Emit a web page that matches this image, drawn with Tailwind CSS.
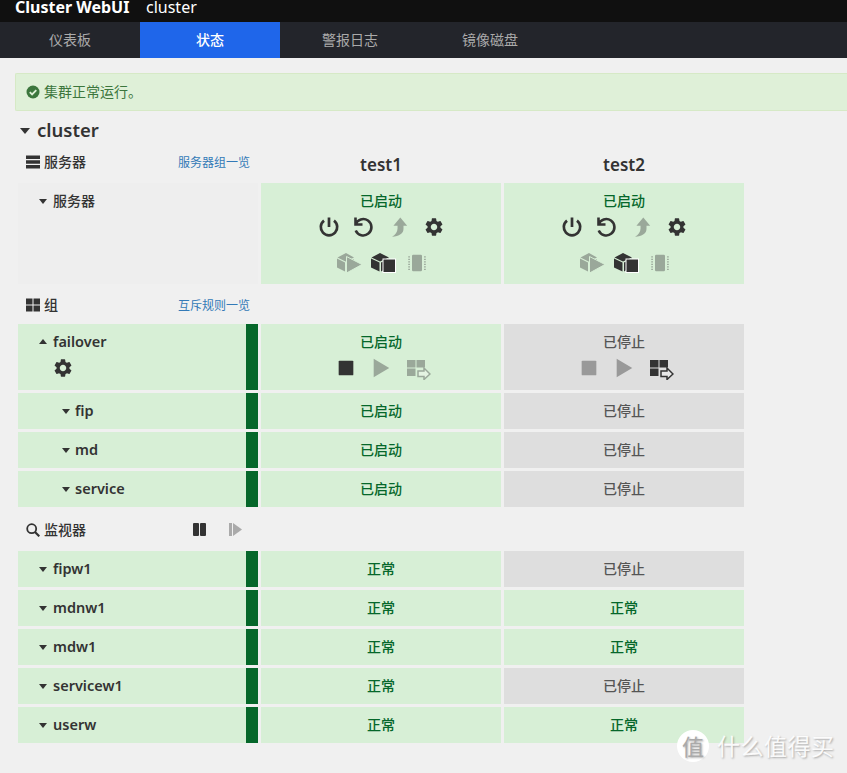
<!DOCTYPE html>
<html>
<head>
  <meta charset="utf-8">
  <meta name="viewport" content="width=device-width, initial-scale=1.0">
  <script src="https://cdn.jsdelivr.net/npm/@tailwindcss/browser@4"></script>
</head>
<body class="relative h-[773px] overflow-hidden bg-[#f0f0f0] text-[#333] text-[14px] font-['Noto_Sans','Noto_Sans_CJK_SC',sans-serif]">

  <!-- icon set -->
  <svg class="hidden">
    <symbol id="i-power" viewBox="0 0 24 24"><path d="M12 2.500v9.500M7 5.600a8.200 8.200 0 1 0 10 0" fill="none" stroke="currentColor" stroke-width="2.700"/></symbol>
    <symbol id="i-restart" viewBox="0 0 24 24"><path d="M3.500 2.500v7h7M3.500 9.500A8.200 8.200 0 1 1 3.700 15.500" fill="none" stroke="currentColor" stroke-width="2.600"/></symbol>
    <symbol id="i-failback" viewBox="0 0 24 24"><path d="M14.500 1.500L22 10.500H18V14C18 19 13.500 22.500 5.500 22.500C9 20.500 11.500 17.500 11.500 13.500V10.500H7Z" fill="currentColor"/></symbol>
    <symbol id="i-gear" viewBox="2 2 20 20"><path fill="currentColor" d="M19.14 12.94c.04-.3.06-.61.06-.94 0-.32-.02-.64-.07-.94l2.03-1.58a.49.49 0 0 0 .12-.61l-1.92-3.32a.488.488 0 0 0-.59-.22l-2.39.96c-.5-.38-1.03-.7-1.62-.94l-.36-2.54a.484.484 0 0 0-.48-.41h-3.84c-.24 0-.43.17-.47.41l-.36 2.54c-.59.24-1.13.57-1.62.94l-2.39-.96c-.22-.08-.47 0-.59.22L2.74 8.87c-.12.21-.08.47.12.61l2.03 1.58c-.05.3-.09.63-.09.94s.02.64.07.94l-2.03 1.58a.49.49 0 0 0-.12.61l1.92 3.32c.12.22.37.29.59.22l2.39-.96c.5.38 1.03.7 1.62.94l.36 2.54c.05.24.24.41.48.41h3.84c.24 0 .44-.17.47-.41l.36-2.54c.59-.24 1.13-.56 1.62-.94l2.39.96c.22.08.47 0 .59-.22l1.92-3.32c.12-.22.07-.47-.12-.61l-2.01-1.58zM12 15.6c-1.98 0-3.6-1.62-3.6-3.6s1.620-3.600 3.600-3.600 3.600 1.620 3.600 3.600-1.620 3.600-3.600 3.600z"/></symbol>
    <symbol id="i-cube-play" viewBox="0 0 25 20"><path fill="currentColor" d="M0.500 4.500L9 0L17 4.500L8.500 8.500ZM0 5.500L8 9.500V18.500L0 14.500ZM9.500 9.500L17 6V8L10 12Z"/><path d="M9.500 3.500L25 11.500L9.500 20Z" fill="currentColor" stroke="#d7efd6" stroke-width="1"/></symbol>
    <symbol id="i-cube-stop" viewBox="0 0 25 20"><path fill="currentColor" d="M0.500 4.500L9 0L18 4.500L9 8.500ZM0 5.500L8.500 9.500V18.500L0 14.500ZM10 9.500L18 5.500V14L10 18.500Z"/><rect x="12" y="6" width="12.500" height="13.500" fill="currentColor" stroke="#fff" stroke-width="1"/></symbol>
    <symbol id="i-chip" viewBox="0 0 24 24"><rect x="6" y="2" width="12" height="20" rx="1.500" fill="currentColor"/><path d="M2.500 4v16.500M21.500 4v16.500" fill="none" stroke="currentColor" stroke-width="2" stroke-dasharray="1.500 1.500"/></symbol>
    <symbol id="i-stop" viewBox="0 0 24 24"><rect x="4" y="4" width="16" height="16" rx="1" fill="currentColor"/></symbol>
    <symbol id="i-play" viewBox="0 0 24 24"><path d="M4 2L21 12L4 22Z" fill="currentColor"/></symbol>
    <symbol id="i-move-on" viewBox="0 0 28 24"><path fill="currentColor" d="M4 4h8.500v7.500H4zM13.500 4H22v7.500h-8.500zM4 12.500h8.500V20H4z"/><path d="M15 15h6v-3l6 6-6 5.500v-3h-6z" fill="#e8e8e8" stroke="currentColor" stroke-width="1.500"/></symbol>
    <symbol id="i-move-off" viewBox="0 0 28 24"><path fill="currentColor" d="M4 4h8.500v7.500H4zM13.500 4H22v7.500h-8.500zM4 12.500h8.500V20H4z"/><path d="M15 15h6v-3l6 6-6 5.500v-3h-6z" fill="#e4f3e2" stroke="currentColor" stroke-width="1.500"/></symbol>
    <symbol id="i-server" viewBox="0 0 14 14"><path fill="currentColor" d="M0 0.500h14v3.500H0zM0 5.200h14v3.500H0zM0 10h14v3.500H0z"/></symbol>
    <symbol id="i-grid" viewBox="0 0 14 14"><path fill="currentColor" d="M0 0.500h6.500v6H0zM7.500 0.500H14v6H7.500zM0 7.500h6.500v6H0zM7.500 7.500H14v6H7.500z"/></symbol>
    <symbol id="i-search" viewBox="0 0 14 14"><circle cx="5.700" cy="5.700" r="4.500" fill="none" stroke="currentColor" stroke-width="1.800"/><path d="M9 9l4.300 4.300" stroke="currentColor" stroke-width="2.200"/></symbol>
    <symbol id="i-check" viewBox="0 0 14 14"><circle cx="7" cy="7" r="6.500" fill="currentColor"/><path d="M3.800 7.200l2.300 2.300 4.200-4.300" fill="none" stroke="#dff0d8" stroke-width="1.800"/></symbol>
  </svg>

  <header class="flex h-[22px] items-start overflow-hidden bg-[#101010] pl-[15px] text-[16px] leading-[14px] text-white">
    <span class="w-[131px] font-bold">Cluster WebUI</span>
    <span>cluster</span>
  </header>

  <nav class="flex h-[36px] bg-[#23252b] text-[14px] leading-[36px] text-[#aaaaaa]">
    <a class="w-[140px] text-center">仪表板</a>
    <a class="w-[140px] bg-[#1f66ea] text-center font-medium text-white">状态</a>
    <a class="w-[140px] text-center">警报日志</a>
    <a class="w-[140px] text-center">镜像磁盘</a>
  </nav>

  <main class="pl-[15px] pt-[15px]">
    <div class="flex h-[38px] items-center gap-[4px] rounded-l-[2px] border border-r-0 border-[#d6e9c6] bg-[#dff0d8] pl-[10px] text-[14px] text-[#3c763d]">
      <svg class="h-[14px] w-[14px]"><use href="#i-check"/></svg>
      <span class="-mt-[1px]">集群正常运行。</span>
    </div>

    <div class="mt-[7px] flex h-[26px] items-center gap-[7px] pb-[3px] pl-[5px] text-[18.5px] font-semibold text-[#333]">
      <span class="mt-[2px] h-0 w-0 border-x-[5.500px] border-t-[6px] border-x-transparent border-t-[#333]"></span>
      <span>cluster</span>
    </div>

    <div class="mt-[3px] ml-[3px] grid w-[726px] grid-cols-3 gap-[3px]">

      <!-- servers -->
      <div class="flex h-[33px] items-start justify-between pl-[8px] pr-[8px] pt-[5px]">
        <span class="flex items-center gap-[4px] font-medium leading-[20px]"><svg class="h-[14px] w-[14px]"><use href="#i-server"/></svg>服务器</span>
        <a class="mt-[1px] text-[12px] leading-[20px] text-[#337ab7]">服务器组一览</a>
      </div>
      <div class="flex h-[33px] items-end justify-center pb-[2px] text-[17px] font-semibold leading-[26px]">test1</div>
      <div class="flex h-[33px] items-end justify-center pb-[2px] text-[17px] font-semibold leading-[26px]">test2</div>

      <div class="h-[101px] bg-[#eeeeee] pl-[21px] pt-[8px]">
        <div class="flex items-center gap-[6px] font-medium leading-[20px]"><span class="h-0 w-0 border-x-[4.500px] border-t-[5px] border-x-transparent border-t-[#333]"></span>服务器</div>
      </div>
      <div class="h-[101px] bg-[#d7efd6] pt-[8px]">
        <div class="text-center font-medium leading-[20px] text-[#05672a]">已启动</div>
        <div class="mt-[4px] flex h-[24px] items-center justify-center text-[#333]">
          <span class="flex w-[35px] justify-center"><svg class="h-[24px] w-[24px]"><use href="#i-power"/></svg></span>
          <span class="flex w-[35px] justify-center"><svg class="h-[24px] w-[24px]"><use href="#i-restart"/></svg></span>
          <span class="flex w-[35px] justify-center pr-[1px] text-[#9aa89a]"><svg class="h-[22px] w-[22px]"><use href="#i-failback"/></svg></span>
          <span class="flex w-[35px] justify-center"><svg class="h-[18px] w-[18px]"><use href="#i-gear"/></svg></span>
        </div>
        <div class="mt-[12px] flex h-[24px] items-center justify-center text-[#333]">
          <span class="flex w-[36px] justify-center pl-[3px] text-[#9aa89a]"><svg class="h-[20px] w-[25px] shrink-0"><use href="#i-cube-play"/></svg></span>
          <span class="flex w-[35px] justify-center"><svg class="h-[20px] w-[25px]"><use href="#i-cube-stop"/></svg></span>
          <span class="flex w-[32px] justify-center text-[#9aa89a]"><svg class="h-[20px] w-[20px]"><use href="#i-chip"/></svg></span>
        </div>
      </div>
      <div class="h-[101px] bg-[#d7efd6] pt-[8px]">
        <div class="text-center font-medium leading-[20px] text-[#05672a]">已启动</div>
        <div class="mt-[4px] flex h-[24px] items-center justify-center text-[#333]">
          <span class="flex w-[35px] justify-center"><svg class="h-[24px] w-[24px]"><use href="#i-power"/></svg></span>
          <span class="flex w-[35px] justify-center"><svg class="h-[24px] w-[24px]"><use href="#i-restart"/></svg></span>
          <span class="flex w-[35px] justify-center pr-[1px] text-[#9aa89a]"><svg class="h-[22px] w-[22px]"><use href="#i-failback"/></svg></span>
          <span class="flex w-[35px] justify-center"><svg class="h-[18px] w-[18px]"><use href="#i-gear"/></svg></span>
        </div>
        <div class="mt-[12px] flex h-[24px] items-center justify-center text-[#333]">
          <span class="flex w-[36px] justify-center pl-[3px] text-[#9aa89a]"><svg class="h-[20px] w-[25px] shrink-0"><use href="#i-cube-play"/></svg></span>
          <span class="flex w-[35px] justify-center"><svg class="h-[20px] w-[25px]"><use href="#i-cube-stop"/></svg></span>
          <span class="flex w-[32px] justify-center text-[#9aa89a]"><svg class="h-[20px] w-[20px]"><use href="#i-chip"/></svg></span>
        </div>
      </div>

      <!-- groups -->
      <div class="col-span-3 flex h-[34px] w-[240px] items-start justify-between px-[8px] pt-[8px]">
        <span class="flex items-center gap-[4px] font-medium leading-[20px]"><svg class="h-[14px] w-[14px]"><use href="#i-grid"/></svg>组</span>
        <a class="mt-[1px] text-[12px] leading-[20px] text-[#337ab7]">互斥规则一览</a>
      </div>

      <div class="flex h-[66px] bg-[#d7efd6]">
        <div class="flex-1 pl-[21px] pt-[7px]">
          <div class="flex items-center gap-[6px] text-[14.5px] font-semibold leading-[20px]"><span class="h-0 w-0 border-x-[4.500px] border-b-[5px] border-x-transparent border-b-[#333]"></span>failover</div>
          <svg class="ml-[15px] mt-[8px] h-[18px] w-[18px]"><use href="#i-gear"/></svg>
        </div>
        <div class="w-[12px] bg-[#05672a]"></div>
      </div>
      <div class="h-[66px] bg-[#d7efd6] pt-[8px]">
        <div class="text-center font-medium leading-[20px] text-[#05672a]">已启动</div>
        <div class="mt-[4px] flex h-[24px] items-center justify-center text-[#333]">
          <span class="flex w-[36px] justify-center pl-[1px]"><svg class="h-[22px] w-[22px]"><use href="#i-stop"/></svg></span>
          <span class="flex w-[36px] justify-center text-[#9aa89a]"><svg class="h-[22px] w-[22px]"><use href="#i-play"/></svg></span>
          <span class="flex w-[36px] justify-center text-[#9aa89a]"><svg class="h-[24px] w-[28px] shrink-0"><use href="#i-move-off"/></svg></span>
        </div>
      </div>
      <div class="h-[66px] bg-[#dedede] pt-[8px]">
        <div class="text-center font-medium leading-[20px] text-[#555]">已停止</div>
        <div class="mt-[4px] flex h-[24px] items-center justify-center text-[#333]">
          <span class="flex w-[36px] justify-center pl-[1px] text-[#999]"><svg class="h-[22px] w-[22px]"><use href="#i-stop"/></svg></span>
          <span class="flex w-[36px] justify-center text-[#999]"><svg class="h-[22px] w-[22px]"><use href="#i-play"/></svg></span>
          <span class="flex w-[36px] justify-center"><svg class="h-[24px] w-[28px] shrink-0"><use href="#i-move-on"/></svg></span>
        </div>
      </div>

      <div class="flex h-[36px] bg-[#d7efd6]">
        <div class="flex flex-1 items-center gap-[5px] pb-[1px] pl-[44px] text-[14.5px] font-semibold"><span class="mt-[1px] h-0 w-0 border-x-[4.500px] border-t-[5px] border-x-transparent border-t-[#333]"></span>fip</div>
        <div class="w-[12px] bg-[#05672a]"></div>
      </div>
      <div class="flex h-[36px] items-center justify-center bg-[#d7efd6] pb-[2px] font-medium text-[#05672a]">已启动</div>
      <div class="flex h-[36px] items-center justify-center bg-[#dedede] pb-[2px] font-medium text-[#555]">已停止</div>

      <div class="flex h-[36px] bg-[#d7efd6]">
        <div class="flex flex-1 items-center gap-[5px] pb-[1px] pl-[44px] text-[14.5px] font-semibold"><span class="mt-[1px] h-0 w-0 border-x-[4.500px] border-t-[5px] border-x-transparent border-t-[#333]"></span>md</div>
        <div class="w-[12px] bg-[#05672a]"></div>
      </div>
      <div class="flex h-[36px] items-center justify-center bg-[#d7efd6] pb-[2px] font-medium text-[#05672a]">已启动</div>
      <div class="flex h-[36px] items-center justify-center bg-[#dedede] pb-[2px] font-medium text-[#555]">已停止</div>

      <div class="flex h-[36px] bg-[#d7efd6]">
        <div class="flex flex-1 items-center gap-[5px] pb-[1px] pl-[44px] text-[14.5px] font-semibold"><span class="mt-[1px] h-0 w-0 border-x-[4.500px] border-t-[5px] border-x-transparent border-t-[#333]"></span>service</div>
        <div class="w-[12px] bg-[#05672a]"></div>
      </div>
      <div class="flex h-[36px] items-center justify-center bg-[#d7efd6] pb-[2px] font-medium text-[#05672a]">已启动</div>
      <div class="flex h-[36px] items-center justify-center bg-[#dedede] pb-[2px] font-medium text-[#555]">已停止</div>

      <!-- monitors -->
      <div class="col-span-3 flex h-[38px] w-[240px] items-start pl-[8px] pt-[10px]">
        <span class="flex w-[167px] items-center gap-[4px] font-medium leading-[20px]"><svg class="h-[14px] w-[14px]"><use href="#i-search"/></svg>监视器</span>
        <span class="mt-[3px] flex w-[36px] gap-[1px]"><i class="h-[13px] w-[6px] rounded-[1px] bg-[#333]"></i><i class="h-[13px] w-[6px] rounded-[1px] bg-[#333]"></i></span>
        <span class="mt-[3px] flex"><i class="h-[13px] w-[3px] bg-[#aaa]"></i><svg class="ml-[1px] h-[13px] w-[9px] text-[#aaa]" viewBox="0 0 9 13"><path d="M0 0L9 6.500L0 13Z" fill="currentColor"/></svg></span>
      </div>

      <div class="flex h-[36px] bg-[#d7efd6]">
        <div class="flex flex-1 items-center gap-[6px] pb-[1px] pl-[21px] text-[14.5px] font-semibold"><span class="mt-[1px] h-0 w-0 border-x-[4.500px] border-t-[5px] border-x-transparent border-t-[#333]"></span>fipw1</div>
        <div class="w-[12px] bg-[#05672a]"></div>
      </div>
      <div class="flex h-[36px] items-center justify-center bg-[#d7efd6] pb-[2px] font-medium text-[#05672a]">正常</div>
      <div class="flex h-[36px] items-center justify-center bg-[#dedede] pb-[2px] font-medium text-[#555]">已停止</div>

      <div class="flex h-[36px] bg-[#d7efd6]">
        <div class="flex flex-1 items-center gap-[6px] pb-[1px] pl-[21px] text-[14.5px] font-semibold"><span class="mt-[1px] h-0 w-0 border-x-[4.500px] border-t-[5px] border-x-transparent border-t-[#333]"></span>mdnw1</div>
        <div class="w-[12px] bg-[#05672a]"></div>
      </div>
      <div class="flex h-[36px] items-center justify-center bg-[#d7efd6] pb-[2px] font-medium text-[#05672a]">正常</div>
      <div class="flex h-[36px] items-center justify-center bg-[#d7efd6] pb-[2px] font-medium text-[#05672a]">正常</div>

      <div class="flex h-[36px] bg-[#d7efd6]">
        <div class="flex flex-1 items-center gap-[6px] pb-[1px] pl-[21px] text-[14.5px] font-semibold"><span class="mt-[1px] h-0 w-0 border-x-[4.500px] border-t-[5px] border-x-transparent border-t-[#333]"></span>mdw1</div>
        <div class="w-[12px] bg-[#05672a]"></div>
      </div>
      <div class="flex h-[36px] items-center justify-center bg-[#d7efd6] pb-[2px] font-medium text-[#05672a]">正常</div>
      <div class="flex h-[36px] items-center justify-center bg-[#d7efd6] pb-[2px] font-medium text-[#05672a]">正常</div>

      <div class="flex h-[36px] bg-[#d7efd6]">
        <div class="flex flex-1 items-center gap-[6px] pb-[1px] pl-[21px] text-[14.5px] font-semibold"><span class="mt-[1px] h-0 w-0 border-x-[4.500px] border-t-[5px] border-x-transparent border-t-[#333]"></span>servicew1</div>
        <div class="w-[12px] bg-[#05672a]"></div>
      </div>
      <div class="flex h-[36px] items-center justify-center bg-[#d7efd6] pb-[2px] font-medium text-[#05672a]">正常</div>
      <div class="flex h-[36px] items-center justify-center bg-[#dedede] pb-[2px] font-medium text-[#555]">已停止</div>

      <div class="flex h-[36px] bg-[#d7efd6]">
        <div class="flex flex-1 items-center gap-[6px] pb-[1px] pl-[21px] text-[14.5px] font-semibold"><span class="mt-[1px] h-0 w-0 border-x-[4.500px] border-t-[5px] border-x-transparent border-t-[#333]"></span>userw</div>
        <div class="w-[12px] bg-[#05672a]"></div>
      </div>
      <div class="flex h-[36px] items-center justify-center bg-[#d7efd6] pb-[2px] font-medium text-[#05672a]">正常</div>
      <div class="flex h-[36px] items-center justify-center bg-[#d7efd6] pb-[2px] font-medium text-[#05672a]">正常</div>
    </div>
  </main>

  <!-- watermark over the page -->
  <div class="absolute left-[677px] top-[730px] flex items-center gap-[10px] text-white/90 [text-shadow:1px_1px_2px_rgba(0,0,0,0.3)]">
    <span class="flex h-[32px] w-[32px] items-center justify-center rounded-full bg-white text-[22px] leading-none text-[#aaa]">值</span>
    <span class="-ml-[2px] text-[23px] leading-[32px] tracking-[0.5px]">什么值得买</span>
  </div>
</body>
</html>
